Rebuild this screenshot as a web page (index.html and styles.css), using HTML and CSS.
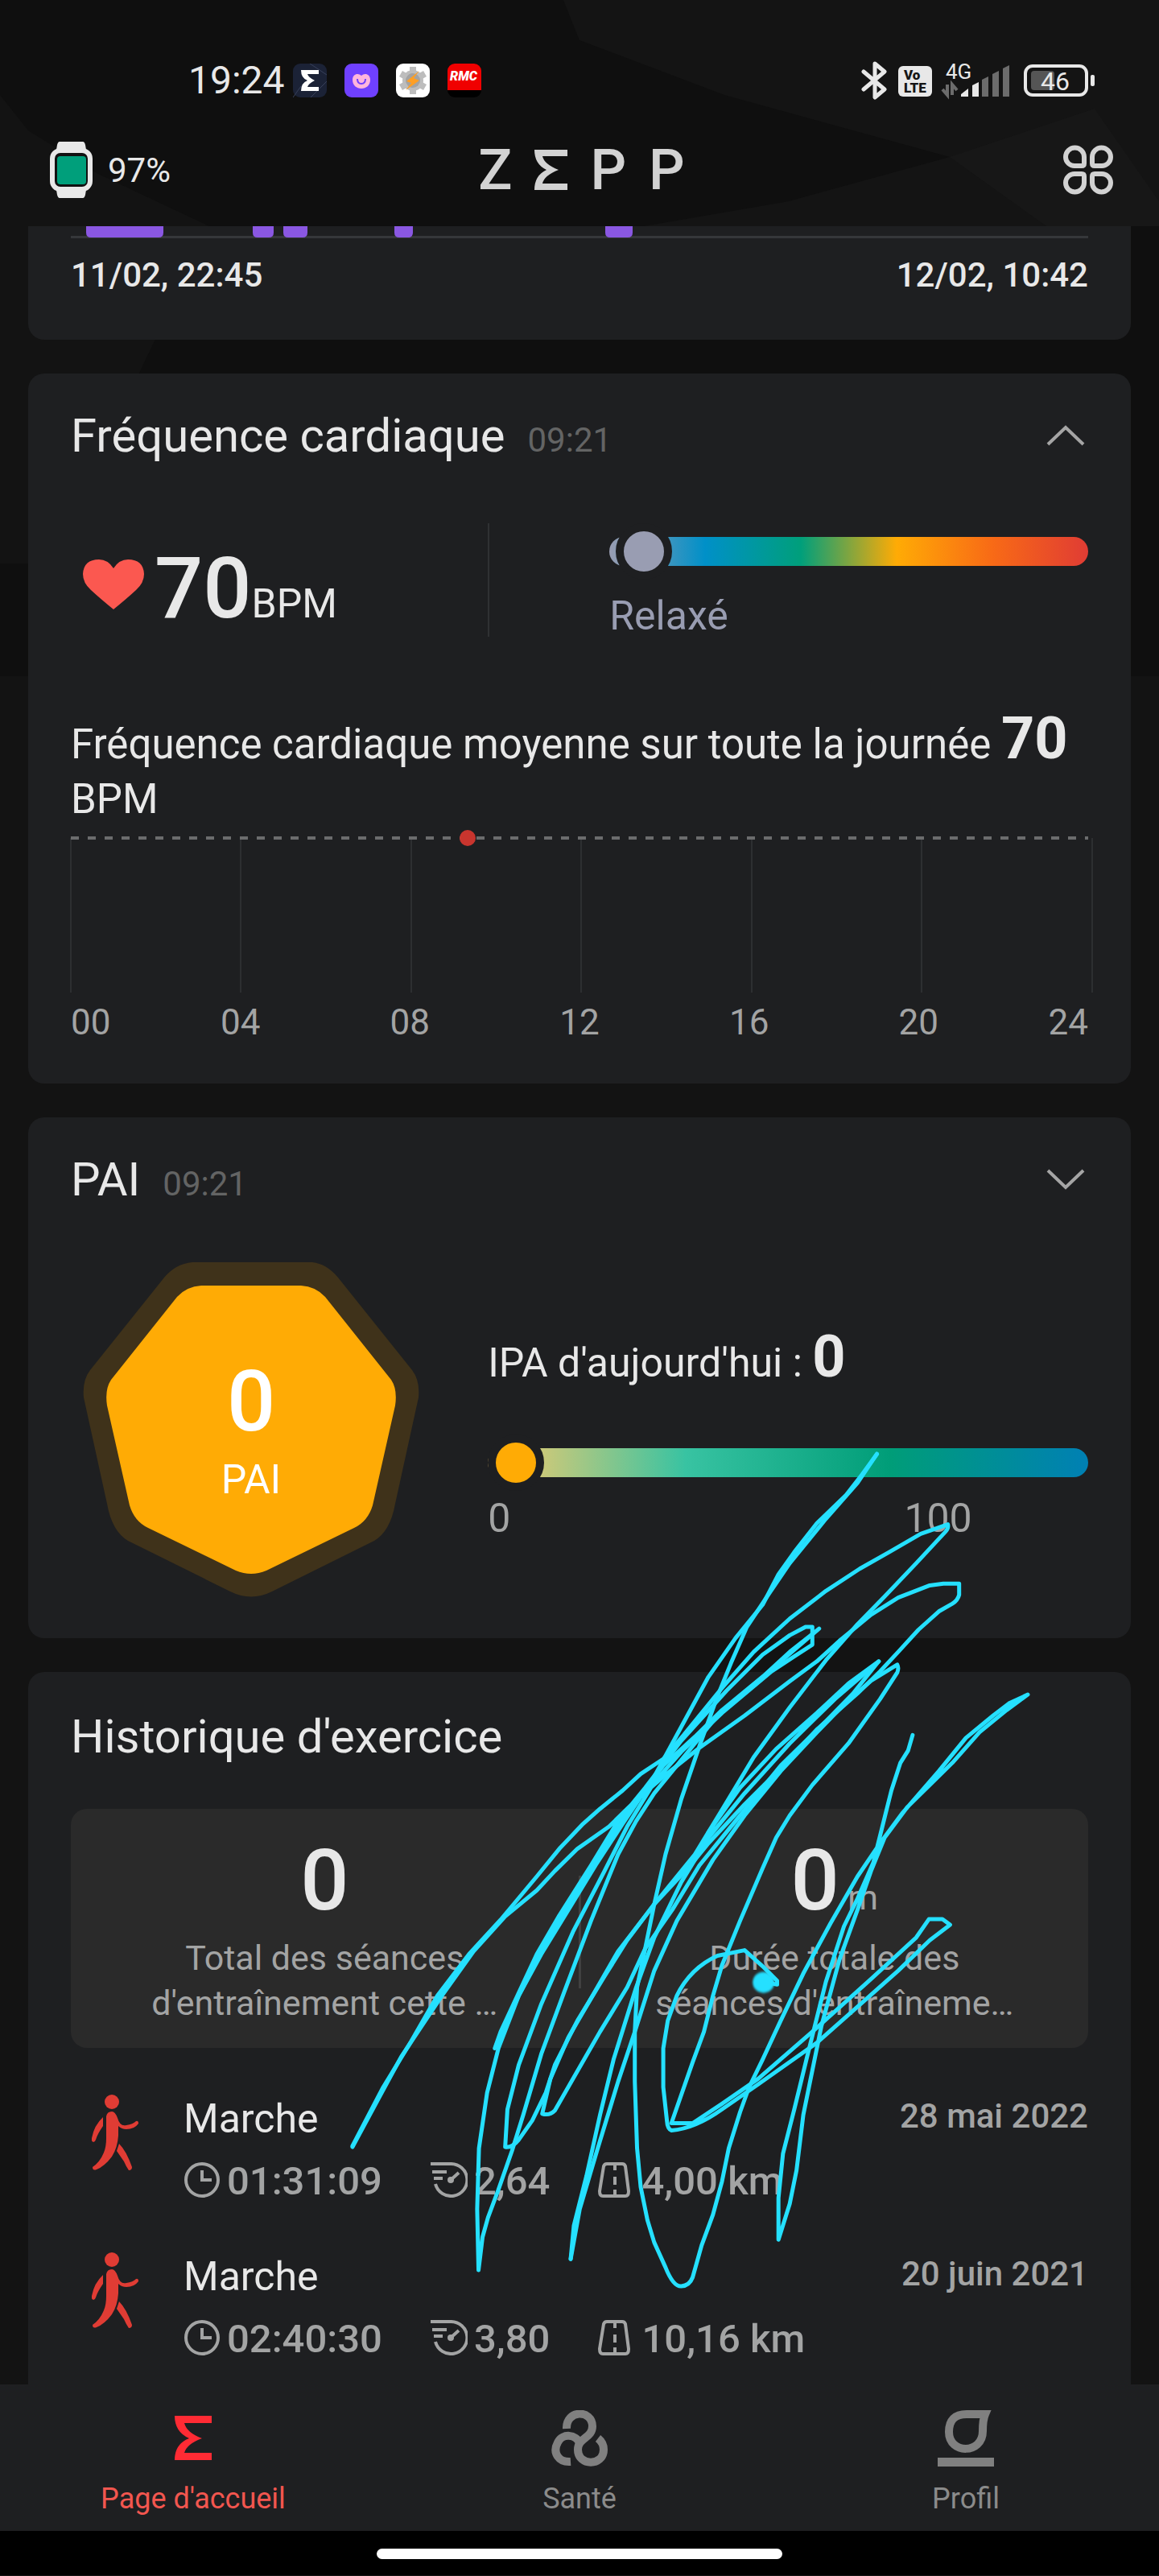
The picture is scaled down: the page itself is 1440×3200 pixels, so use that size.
FILE: index.html
```html
<!DOCTYPE html>
<html lang="fr">
<head>
<meta charset="UTF-8" />
<meta name="viewport" content="width=device-width, initial-scale=1" />
<title>Zepp</title>
<link rel="stylesheet" href="styles.css">
</head>
<body>

<svg class="backdrop" viewBox="0 0 1440 840" preserveAspectRatio="none" aria-hidden="true">
  <rect width="1440" height="840" fill="#0f0f0f"/>
  <path d="M0 118L35 162L120 215L260 281L60 700H0Z" fill="#131313"/>
  <path d="M720 50L900 118L1180 195L980 250L800 281H1440V0L700 0Z" fill="#141414"/>
  <path d="M1180 195L1360 135L1440 250V281H1300Z" fill="#171717"/>
</svg>

<header>
  <div class="status">
    <span class="clock">19:24</span>
    <svg class="app" viewBox="0 0 42 42">
      <rect width="42" height="42" rx="9" fill="#1b2236"/>
      <path d="M21 0L42 14M0 42L10 28M22 42L42 22" stroke="#39415a" fill="none"/>
      <path d="M10 8H32V13H18Q19 17 27 21Q19 25 18 29H32V34H10Q10 24 18 21Q10 18 10 8Z" fill="#fff"/>
    </svg>
    <svg class="app" viewBox="0 0 42 42">
      <rect width="42" height="42" rx="9" fill="#6f40ff"/>
      <path d="M21 15C17 11 10 13 10 20C10 27 15 31 21 31S32 27 32 20C32 13 25 11 21 15Z" fill="#ffb5dd"/>
      <path d="M16 19Q16 25 21 25T26 19" fill="none" stroke="#6f40ff" stroke-width="2"/>
    </svg>
    <svg class="app" viewBox="0 0 42 42">
      <rect width="42" height="42" rx="9" fill="#fff"/>
      <circle cx="21" cy="21" r="13" fill="#bdbdbd"/>
      <path d="M21 4V38M6 12.500L36 29.500M6 29.500L36 12.500" stroke="#bdbdbd" stroke-width="8"/>
      <circle cx="21" cy="21" r="9" fill="#a3a3a3"/>
      <path d="M29 9L13 22L19 24L12 33L29 21L22 18Z" fill="#ff9f24"/>
    </svg>
    <svg class="app" viewBox="0 0 42 42">
      <rect width="42" height="42" rx="9" fill="#000"/>
      <path d="M9 0H33A9 9 0 0 1 42 9V33H0V9A9 9 0 0 1 9 0Z" fill="#f00000"/>
      <text class="rmc" x="20" y="21" text-anchor="middle">RMC</text>
    </svg>

    <svg class="radio" viewBox="0 0 290 50">
      <path d="M3 14L29 36L17 46V4L29 14L3 36" fill="none" stroke="#e8e8e8" stroke-width="5" stroke-linejoin="round" stroke-linecap="round"/>
      <rect x="46" y="7" width="42" height="38" rx="6" fill="#e8e8e8"/>
      <text class="volte" x="53" y="24">Vo</text>
      <text class="volte" x="53" y="40">LTE</text>
      <text class="net" x="105" y="23">4G</text>
      <path d="M107 30V43L101 36M113 43V30L119 37" fill="none" stroke="#6c6c6c" stroke-width="4"/>
      <path d="M124 42L133 35V45H124ZM138 31L146 27V45H138Z" fill="#e8e8e8"/>
      <path d="M150 24L158 20V45H150ZM163 17L171 13V45H163ZM176 10L184 6V45H176Z" fill="#6c6c6c"/>
      <rect x="204" y="7" width="76" height="36" rx="9" fill="none" stroke="#e8e8e8" stroke-width="4"/>
      <rect x="211" y="13" width="29" height="24" rx="4" fill="#555"/>
      <rect x="285" y="18" width="5" height="14" rx="2" fill="#e8e8e8"/>
      <text class="batt" x="241" y="37" text-anchor="middle">46</text>
    </svg>
  </div>

  <div class="appbar">
    <a class="device" href="#montre">
      <svg width="53" height="70" viewBox="0 0 53 70">
        <path d="M12 0H41Q43 0 44 4L45 10H8L9 4Q10 0 12 0ZM8 60H45L44 66Q43 70 41 70H12Q10 70 9 66Z" fill="#e8e8e8"/>
        <rect x="3" y="11" width="47" height="48" rx="10" fill="#111" stroke="#e8e8e8" stroke-width="6"/>
        <rect x="9" y="18" width="36" height="35" rx="4" fill="#009f7b"/>
      </svg>
      97%
    </a>
    <h1 class="brand" aria-label="Zepp">
      <span>Z</span>
      <svg width="41" height="50" viewBox="0 0 41 50"><path d="M0 0H41V8H10Q12 18 30 25Q12 32 10 42H41V50H0Q0 32 15 25Q0 18 0 0Z" fill="#d2d2d2"/></svg>
      <span>P</span>
      <span>P</span>
    </h1>
    <button class="icon-btn" type="button" aria-label="Menu">
      <svg width="62" height="62" viewBox="0 0 62 62" fill="none" stroke="#d2d2d2" stroke-width="6">
        <path d="M26 15V23Q26 26 23 26H15A11 11 0 0 1 3 15A11.500 11.500 0 0 1 26 15Z"/>
        <path d="M36 15V23Q36 26 39 26H47A11 11 0 0 0 59 15A11.500 11.500 0 0 0 36 15Z"/>
        <path d="M26 47V39Q26 36 23 36H15A11 11 0 0 0 3 47A11.500 11.500 0 0 0 26 47Z"/>
        <path d="M36 47V39Q36 36 39 36H47A11 11 0 0 1 59 47A11.500 11.500 0 0 1 36 47Z"/>
      </svg>
    </button>
  </div>
</header>

<main>
  <section class="card sleep">
    <svg class="sleep-bars" viewBox="0 0 1264 15" preserveAspectRatio="none">
      <rect y="12" width="1264" height="3" fill="#35373a"/>
      <path d="M19 0H115V8Q115 14 109 14H25Q19 14 19 8ZM226 0H252V8Q252 14 246 14H232Q226 14 226 8ZM264 0H294V8Q294 14 288 14H270Q264 14 264 8ZM402 0H425V8Q425 14 419 14H408Q402 14 402 8ZM664 0H698V8Q698 14 692 14H670Q664 14 664 8Z" fill="#8a57e2"/>
    </svg>
    <div class="sleep-times">
      <span>11/02, 22:45</span>
      <span>12/02, 10:42</span>
    </div>
  </section>

  <section class="card heart">
    <div class="card-head">
      <h2>Fréquence cardiaque</h2>
      <time>09:21</time>
      <button class="chevron" type="button" aria-label="Réduire">
        <svg width="48" height="28" viewBox="0 0 48 28"><path d="M2 25L24 4L46 25" fill="none" stroke="#a5a5a5" stroke-width="4"/></svg>
      </button>
    </div>
    <div class="split pulse">
      <div class="bpm">
        <svg width="76" height="62" viewBox="0 0 76 62"><path d="M38 62Q22 49 10 38Q0 29 0 18Q1 0 20 0Q31 0 38 11Q45 0 56 0Q75 0 76 18Q76 29 66 38Q54 49 38 62Z" fill="#fb5850"/></svg>
        <b>70</b><span>BPM</span>
      </div>
      <div class="zone">
        <div class="scale scale-heart"><i class="knob"></i></div>
        <p>Relaxé</p>
      </div>
    </div>
    <p class="average">Fréquence cardiaque moyenne sur toute la journée <b>70</b> BPM</p>
    <svg class="chart" viewBox="0 0 1264 202" preserveAspectRatio="none">
      <path d="M0 10V202M211 10V202M423 10V202M634 10V202M846 10V202M1057 10V202M1269 10V202" stroke="#2d2f31" stroke-width="2"/>
      <path d="M0 10H1264" stroke="#6b6c6d" stroke-width="4" stroke-dasharray="10 11"/>
      <circle cx="493" cy="10" r="10" fill="#c8352e"/>
    </svg>
    <div class="hours">
      <span>00</span><span>04</span><span>08</span><span>12</span><span>16</span><span>20</span><span>24</span>
    </div>
  </section>

  <section class="card pai">
    <div class="card-head">
      <h2>PAI</h2>
      <time>09:21</time>
      <button class="chevron" type="button" aria-label="Développer">
        <svg width="48" height="28" viewBox="0 0 48 28"><path d="M2 3L24 24L46 3" fill="none" stroke="#a5a5a5" stroke-width="4"/></svg>
      </button>
    </div>
    <div class="split pai-body">
      <div class="badge">
        <svg width="418" height="416" viewBox="0 0 418 416">
          <path d="M136 0H285Q303 2 317 19L409 134Q419 147 417 168L388 300Q382 334 362 346L235 409Q209 422 183 409L56 346Q36 334 30 300L1 168Q-1 147 9 134L101 19Q115 2 136 0Z" fill="#3f321a"/>
          <path d="M147 29H271Q289 30 301 43L383 146Q391 158 388 178L360 302Q354 322 337 330L228 383Q209 391 190 383L81 330Q64 322 58 302L30 178Q27 158 35 146L117 43Q129 30 147 29Z" fill="#ffab05"/>
        </svg>
        <div class="badge-text"><b>0</b><span>PAI</span></div>
      </div>
      <div class="pai-today">
        <p>IPA d'aujourd'hui : <b>0</b></p>
        <div class="scale scale-pai"><i class="knob"></i></div>
        <div class="ticks"><span>0</span><span>100</span></div>
      </div>
    </div>
  </section>

  <section class="card history">
    <h2>Historique d'exercice</h2>
    <div class="totals">
      <div>
        <b>0</b>
        <p>Total des séances<br>d'entraînement cette …</p>
      </div>
      <i class="rule"></i>
      <div>
        <b>0</b> <small>m</small>
        <p>Durée totale des<br>séances d'entraîneme…</p>
      </div>
    </div>

    <ul>
      <li>
        <svg class="walker" viewBox="0 0 58 94"><use href="#walk"/></svg>
        <div>
          <h3>Marche</h3>
          <div class="metrics">
            <span><svg viewBox="0 0 46 44"><use href="#time"/></svg>01:31:09</span>
            <span><svg viewBox="0 0 46 44"><use href="#pace"/></svg>2,64</span>
            <span><svg viewBox="0 0 46 44"><use href="#road"/></svg>4,00 km</span>
          </div>
        </div>
        <time>28 mai 2022</time>
      </li>
      <li>
        <svg class="walker" viewBox="0 0 58 94"><use href="#walk"/></svg>
        <div>
          <h3>Marche</h3>
          <div class="metrics">
            <span><svg viewBox="0 0 46 44"><use href="#time"/></svg>02:40:30</span>
            <span><svg viewBox="0 0 46 44"><use href="#pace"/></svg>3,80</span>
            <span><svg viewBox="0 0 46 44"><use href="#road"/></svg>10,16 km</span>
          </div>
        </div>
        <time>20 juin 2021</time>
      </li>
    </ul>
  </section>
</main>

<nav>
  <a class="active" href="#accueil">
    <svg width="70" height="70" viewBox="0 0 70 70"><path d="M12 7H58V16H24Q27 28 46 35Q27 42 24 53H58V62H12Q12 42 30 35Q12 27 12 7Z" fill="#ff2b34"/></svg>
    Page d'accueil
  </a>
  <a href="#sante">
    <svg width="70" height="70" viewBox="0 0 70 70" fill="none" stroke="#808080" stroke-width="10">
      <path d="M19 23C18 -1 51 -1 51 20C51 35 33 34 33 49C33 70 65 70 65 49C65 43 63 39 58 35"/>
      <path d="M35 41C31 30 14 28 8 40C1 53 9 65 24 64"/>
    </svg>
    Santé
  </a>
  <a href="#profil">
    <svg width="70" height="70" viewBox="0 0 70 70">
      <path d="M36 5H59Q56 12 56 26C56 55 14 55 14 27Q14 5 36 5Z" fill="none" stroke="#808080" stroke-width="10"/>
      <rect y="59" width="70" height="11" fill="#808080"/>
    </svg>
    Profil
  </a>
</nav>
<footer><i></i></footer>

<!-- freehand marker strokes over the cards -->
<svg class="scribble" viewBox="0 0 1568 1568" preserveAspectRatio="none" aria-hidden="true">
  <path d="M32 1286L100 1180L160 1100L220 1015L290 940L360 878L440 800L490 750L540 707L580 678L630 645L670 615L720 588L765 545L850 460L920 395L1000 335L1080 285L1155 245L1220 215L1290 182L1350 165Q1352 172 1345 178L1280 235L1210 295L1150 345L1080 410L1000 495L920 585L850 680L790 760L700 850L620 935L560 1020L510 1090L470 1165L452 1228Q468 1232 480 1222L520 1165L580 1080L640 1000L680 930L740 860L800 780L860 720L940 640L980 600L1080 520L1140 470L1197 412"/>
  <path d="M32 1288L90 1200L140 1125L230 1015L300 935L370 872L440 825L480 790L530 750L600 710L650 670L720 620L800 568L900 510L1000 448L1060 412L1110 375L1180 328L1240 297L1310 275L1340 272L1375 272L1375 292Q1372 302 1360 308L1330 322L1285 355L1240 395L1200 430L1150 470L1060 535L980 605L900 670L820 740L780 780L700 850L640 915L590 980L530 1060L480 1140L460 1190L430 1240L400 1275Q385 1290 370 1288L375 1220L400 1140L450 1030L520 900L590 790L640 710L700 630L760 575L850 505L960 430L1010 403L1050 382V350H1035L1000 365L940 400L860 465L760 555L680 640L620 700L560 780L490 870L440 940L400 1010L360 1080L347 1110"/>
  <path d="M1193 38L1160 75L1125 112L1060 163L1010 215L975 255L940 310L880 370L820 440L760 530L700 620L630 705L570 780L510 860L450 940L400 1015L350 1105"/>
  <path d="M1193 38L1150 90L1080 155L1000 235L950 295L905 350L870 415L840 475L800 565L760 660L725 760L700 850L680 930L662 1000L657 1080V1170L662 1290L670 1360L685 1420L700 1460L725 1505Q742 1540 760 1539Q778 1538 785 1523L793 1500L805 1465L830 1410L850 1350L865 1290L890 1225L910 1180L940 1130L980 1060L1030 975L1090 885L1150 800L1200 740L1250 685L1330 610L1390 550L1450 510L1485 488L1527 472L1480 500L1420 540L1360 595L1260 675L1210 730L1180 790L1150 860L1110 950L1070 1070L1050 1150L1030 1230L1015 1330L1000 1390L975 1455L975 1380L985 1300L1010 1220L1040 1120L1080 990L1120 890L1150 840L1185 775L1205 710L1225 645L1245 595L1262 573L1272 545"/>
  <path d="M311 1510L308 1400L312 1290L330 1190L355 1110L400 1015L460 920L520 835L600 735L660 665L720 600L790 548L850 500L950 433L1065 353L1000 395L920 455L840 510L760 590L700 650L660 700L620 760L560 880L500 1010L450 1120L410 1230L385 1295L355 1365L332 1415L320 1450L311 1510"/>
  <path d="M515 1490L522 1430L550 1340L580 1230L610 1130L660 1000L700 910L760 810L820 730L900 650L1000 560L1100 480L1197 412L1130 452L1060 505L970 570L890 640L820 720"/>
  <path d="M515 1490L535 1400L575 1290L620 1170L657 1080L700 970L750 880L830 770L900 690L980 610L1060 540L1120 490L1180 447L1238 418Q1242 424 1238 432L1200 480L1130 560L1050 635L1000 690L970 730L940 785L890 880L850 960L830 1015L810 1080L785 1135L738 1245H785L850 1210L930 1165L1050 1080L1180 985L1280 910L1308 877H1338L1355 887L1310 915L1240 970L1150 1035L1060 1100L930 1175L850 1220Q790 1255 738 1258Q729 1255 728 1240L720 1180V1110L730 1060L750 1015Q780 965 840 943L900 933L940 962L972 988V995L945 990"/>
  <ellipse class="pen" cx="942" cy="991" rx="24" ry="19"/>
</svg>

<!-- shared icons of the exercise rows -->
<svg class="defs" width="0" height="0" aria-hidden="true">
  <symbol id="walk" viewBox="0 0 58 94">
    <g fill="#e03c34">
      <circle cx="25" cy="9" r="9"/>
      <path d="M18 27Q19 21 25 21Q29 21 32 29Q35 40 43 38Q51 37 55 33Q58 32 58 36Q53 43 43 43Q37 43 33 39V51Q32 66 25 77Q16 89 6 93Q1 95 1 90Q10 84 15 72Q18 65 18 54Z"/>
      <path d="M14 28V39Q7 49 5 56Q4 59 2 59Q-1 58 0 54Q3 38 14 28Z"/>
      <path d="M34 61Q43 70 50 90Q50 94 46 94Q43 90 40 83L31 70Z"/>
    </g>
  </symbol>
  <symbol id="time" viewBox="0 0 46 44">
    <g fill="none" stroke="#a3a4a4" stroke-width="4"><circle cx="23" cy="22" r="20"/><path d="M23 10V22H35"/></g>
  </symbol>
  <symbol id="pace" viewBox="0 0 46 44">
    <g fill="none" stroke="#a3a4a4" stroke-width="4"><path d="M0 2H25A20 20 0 1 1 6 27M2 12H20M4 20H15M25 22L35 13"/></g>
    <circle cx="25" cy="22" r="4" fill="#a3a4a4"/>
  </symbol>
  <symbol id="road" viewBox="0 0 46 44">
    <g fill="none" stroke="#a3a4a4" stroke-width="4"><path d="M11 2H30Q33 2 34 5L38 36Q38 42 34 42H6Q2 42 2 36L7 5Q8 2 11 2ZM21 4V10M21 18V28M21 34V40"/></g>
  </symbol>
</svg>

</body>
</html>
```
FILE: styles.css
```css
* {
  box-sizing: border-box;
}
body {
  margin: 0;
  position: relative;
  background: #131313;
  color: #e8e8e8;
  font-family: Roboto, "Liberation Sans", sans-serif;
  font-size: 50px;
}
h1, h2, h3, p, ul {
  margin: 0;
  padding: 0;
  font-weight: 400;
}
svg {
  display: block;
  flex: none;
}
a {
  color: inherit;
  text-decoration: none;
}
button {
  padding: 0;
  border: 0;
  background: none;
  cursor: pointer;
}
b {
  font-weight: 500;
}
.backdrop {
  position: absolute;
  z-index: -1;
  top: 0;
  left: 0;
  width: 100%;
  height: 840px;
}
.defs {
  position: absolute;
}

/* status bar */
.status {
  display: flex;
  align-items: center;
  gap: 22px;
  padding: 76px 80px 0 234px;
}
.clock {
  font-size: 48px;
  line-height: 48px;
  margin-right: -12px;
}
.app {
  width: 42px;
  height: 42px;
}
.rmc {
  font: italic 900 16px Roboto, sans-serif;
  fill: #fff;
}
.radio {
  width: 290px;
  height: 50px;
  margin: -1px 0 -1px auto;
}
.volte {
  font: 900 17px Roboto, sans-serif;
  fill: #151515;
}
.net {
  font-size: 26px;
  fill: #e8e8e8;
}
.batt {
  font-size: 32px;
  fill: #e8e8e8;
}

.appbar {
  display: grid;
  grid-template-columns: 1fr auto 1fr;
  align-items: center;
  padding: 52px 57px 35px 62px;
}
.device {
  display: flex;
  align-items: center;
  gap: 19px;
  font-size: 42px;
}
.brand {
  display: flex;
  align-items: center;
  gap: 28px;
  color: #d2d2d2;
  font-size: 70px;
  font-weight: 500;
  line-height: 70px;
}
.icon-btn {
  justify-self: end;
}

/* cards */
main {
  display: flex;
  flex-direction: column;
  gap: 42px;
  padding: 0 35px;
}
.card {
  background: #1e1f21;
  border-radius: 20px;
  padding: 47px 53px 51px;
}
h2 {
  font-size: 58px;
  line-height: 60px;
}
.card-head {
  display: flex;
  align-items: baseline;
  height: 60px;
}
.card-head time {
  margin-left: 28px;
  font-size: 42px;
  color: #636464;
}
.chevron {
  align-self: center;
  margin-left: auto;
  margin-right: 4px;
}
.split {
  display: grid;
  grid-template-columns: 41fr 59fr;
}

.sleep {
  padding-top: 0;
  padding-bottom: 55px;
  border-radius: 0 0 20px 20px;
}
.sleep-bars {
  width: 100%;
  height: 15px;
}
.sleep-times {
  display: flex;
  justify-content: space-between;
  margin-top: 21px;
  font-size: 42px;
  font-weight: 500;
  line-height: 50px;
}

/* heart rate */
.pulse {
  margin-top: 79px;
  height: 140px;
}
.bpm {
  display: flex;
  align-items: baseline;
  padding: 29px 0 0 15px;
}
.bpm svg {
  align-self: flex-start;
  margin: 16px 13px 0 0;
}
.bpm b,
.badge b,
.totals b {
  font-size: 106px;
  line-height: 104px;
}
.zone {
  border-left: 2px solid #2f3133;
  padding: 17px 0 0 149px;
}
.zone p {
  margin-top: 36px;
  line-height: 52px;
  color: #999db2;
}
.scale {
  display: flex;
  align-items: center;
  height: 36px;
  border-radius: 18px;
}
.scale-heart {
  padding-left: 8px;
  background: linear-gradient(90deg, #999db2, #0090c8 20%, #009f7b 40%, #ffab05 60%, #f86a16 80%, #e03c34);
}
.scale-pai {
  background: linear-gradient(90deg, #ffcb6b, #38c3a2 33%, #009d78 67%, #0080b4);
}
.knob {
  width: 70px;
  height: 70px;
  border: 10px solid #1e1f21;
  border-radius: 50%;
  background: #999db2;
}
.scale-pai .knob {
  background: #ffab05;
}
.average {
  margin-top: 94px;
  font-size: 51px;
  line-height: 68px;
}
.average b,
.pai-today b {
  font-size: 72px;
  font-weight: 700;
}
.chart {
  width: 100%;
  height: 202px;
  margin-top: 4px;
  overflow: visible;
}
.hours {
  display: grid;
  grid-template-columns: 1fr repeat(5, 2fr) 1fr;
  margin-top: 12px;
  font-size: 44px;
  line-height: 50px;
  text-align: center;
  color: #a3a4a4;
}
.hours span:first-child {
  text-align: left;
}
.hours span:last-child {
  text-align: right;
}

/* PAI */
.pai-body {
  margin-top: 73px;
}
.badge {
  display: grid;
  justify-content: start;
  align-items: center;
  padding-left: 15px;
  color: #fff;
}
.badge > * {
  grid-area: 1 / 1;
}
.badge-text {
  display: flex;
  flex-direction: column;
  align-items: center;
  gap: 19px;
  line-height: 52px;
}
.pai-today {
  padding-top: 84px;
  line-height: 68px;
}
.scale-pai {
  margin-top: 72px;
}
.ticks {
  display: grid;
  grid-template-columns: 1fr 1fr;
  margin-top: 26px;
  line-height: 50px;
  color: #a3a4a4;
}
.ticks span:last-child {
  text-align: center;
}

/* exercise history */
.history {
  padding-top: 50px;
  padding-bottom: 32px;
  border-radius: 20px 20px 0 0;
}
.totals {
  display: grid;
  grid-template-columns: 1fr 3px 1fr;
  margin-top: 60px;
  padding: 37px 0 28px;
  border-radius: 20px;
  background: #2a2a2a;
  font-size: 43px;
  line-height: 56px;
  text-align: center;
  color: #a3a4a4;
}
.totals b {
  color: #e8e8e8;
}
.totals small {
  font-size: 43px;
}
.totals p {
  margin-top: 16px;
}
.rule {
  align-self: center;
  height: 140px;
  background: #414141;
}
ul {
  display: flex;
  flex-direction: column;
  gap: 64px;
  margin-top: 58px;
  list-style: none;
}
li {
  display: flex;
  padding-left: 26px;
}
.walker {
  width: 58px;
  height: 94px;
  margin-right: 56px;
}
h3 {
  font-size: 50px;
  line-height: 60px;
}
.metrics {
  display: flex;
  gap: 60px;
  margin-top: 24px;
  font-size: 49px;
  font-weight: 500;
  line-height: 48px;
  color: #a3a4a4;
}
.metrics span {
  display: flex;
  gap: 8px;
}
.metrics svg {
  width: 46px;
  height: 44px;
}
li time {
  margin-left: auto;
  font-size: 42px;
  font-weight: 500;
  line-height: 54px;
  color: #a3a4a4;
}

/* bottom navigation */
nav {
  display: grid;
  grid-template-columns: repeat(3, 1fr);
  background: #1e1f21;
  padding: 32px 0 18px;
}
nav a {
  display: flex;
  flex-direction: column;
  align-items: center;
  gap: 18px;
  font-size: 36px;
  line-height: 44px;
  color: #8b8b8b;
}
nav .active {
  color: #f2564f;
}
footer {
  padding: 22px 0 20px;
  background: #000;
}
footer i {
  display: block;
  width: 35%;
  height: 13px;
  margin: 0 auto;
  border-radius: 7px;
  background: #fff;
}

.scribble {
  position: absolute;
  top: 1780px;
  left: 420px;
  width: calc(100% - 560px);
  height: 1080px;
  overflow: visible;
  pointer-events: none;
  fill: none;
  stroke: #25e0ff;
  stroke-width: 5px;
  stroke-linejoin: round;
  stroke-linecap: round;
}
.scribble path {
  vector-effect: non-scaling-stroke;
}
.pen {
  fill: #25e0ff;
  stroke: none;
  filter: blur(2px);
}
```
